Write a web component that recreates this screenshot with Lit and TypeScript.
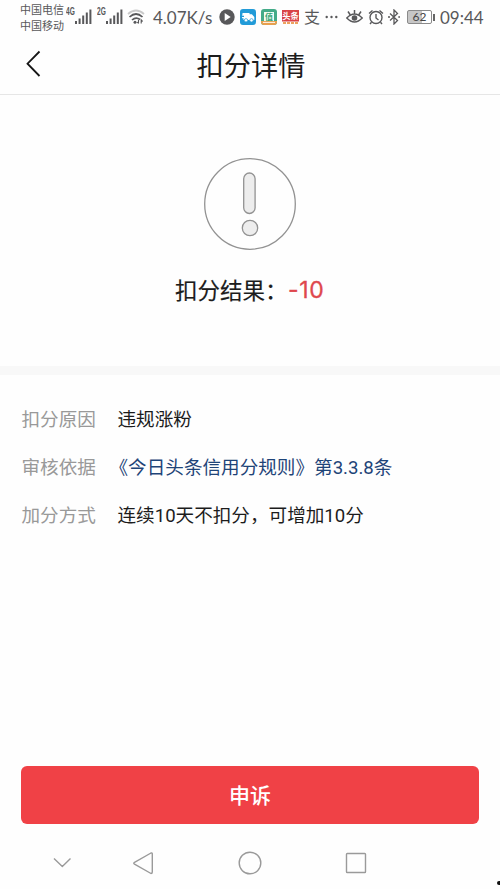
import { LitElement, html, css, svg } from "lit";
import { customElement } from "lit/decorators.js";

const signal = svg`
  <rect x="0" y="12" width="2" height="3"/><rect x="3.6" y="9.5" width="2" height="5.5"/>
  <rect x="7.2" y="6.5" width="2" height="8.5"/><rect x="10.8" y="3.5" width="2" height="11.5"/>
  <rect x="14.4" y="0.5" width="2" height="14.5"/>`;

@customElement("status-bar")
class StatusBar extends LitElement {
  static styles = css`
    :host { display: flex; align-items: center; height: 34px; padding-left: 20px; color: #58585a; }
    svg { display: block; flex: none; }
    .carriers { width: 46px; font-size: 11px; line-height: 16px; white-space: nowrap; margin-top: -1px; flex: none; }
    .net { width: 9px; font: 700 10px/10px "Liberation Sans", sans-serif; height: 22px; flex: none; }
    .net span { display: block; transform: scaleX(0.66); transform-origin: left; padding-top: 1px; }
    .net2 { margin-left: 5px; }
    .bars { fill: currentColor; }
    .wifi { margin-left: 4px; }
    .speed { width: 60px; margin-left: 8px; font: 17px/20px Lato, sans-serif; white-space: nowrap; flex: none; padding-top: 1px; }
    .app { margin-left: 5px; }
    .play { margin-left: 6px; }
    .pay { margin-left: 5px; font-size: 16px; width: 16px; line-height: 20px; margin-top: -2px; flex: none; }
    .dots { margin-left: 5px; }
    .eye { margin-left: 8px; }
    .alarm { margin-left: 5px; }
    .bt { margin-left: 4px; }
    .battery { margin-left: 7px; width: 23px; height: 12px; border: 1px solid #8a8a8a; border-radius: 2px; flex: none;
      font: 12px/12px Lato, sans-serif; color: #444; text-align: center; background: linear-gradient(90deg, #c6c6c6 62%, #fff 62%); }
    .cap { width: 2px; height: 7px; background: #666; margin-left: 1px; flex: none; }
    .time { margin-left: 5px; font: 17px/20px Lato, sans-serif; padding-top: 1px; }
  `;
  render() {
    return html`
      <div class="carriers"><div>中国电信</div><div>中国移动</div></div>
      <div class="net"><span>4G</span></div>
      <svg class="bars" width="17" height="16">${signal}</svg>
      <div class="net net2"><span>2G</span></div>
      <svg class="bars" width="17" height="16">${signal}</svg>
      <svg class="wifi" width="18" height="16" fill="none" stroke="#58585a" stroke-width="1.7">
        <path d="M1 5Q9-2 17 5" stroke="#c9c9c9"/><path d="M2.5 8Q9 2 15.5 8M5 11Q9 7.3 13 10.5"/>
        <circle cx="8" cy="13.3" r="1.5" fill="#58585a" stroke="none"/>
        <path d="M11.5 11v3.5M10.2 13l1.3 1.5M14.2 14.5V11l1.4 1.5" stroke-width="1.1"/>
      </svg>
      <div class="speed">4.07K/s</div>
      <svg class="play" width="16" height="16"><circle cx="8" cy="8" r="7.7" fill="#58585a"/><path d="M5.7 4v8l6-4z" fill="#fff"/></svg>
      <svg class="app" width="16" height="16"><rect width="16" height="16" rx="3" fill="#229bd8"/>
        <path d="M2.5 4h7v1.3h2.4L14.3 8v3H3.5V9.2H2V8h2V6.8H2.2V5.6H2.5z" fill="#fff"/>
        <circle cx="6" cy="11.3" r="1.7" fill="#fff" stroke="#229bd8" stroke-width=".7"/><circle cx="11.5" cy="11.3" r="1.7" fill="#fff" stroke="#229bd8" stroke-width=".7"/></svg>
      <svg class="app" width="16" height="16"><rect width="16" height="16" rx="3" fill="#43ab88"/><path d="M0 12h16v1a3 3 0 0 1-3 3H3a3 3 0 0 1-3-3z" fill="#e9a04e"/><path d="M3 3h10v9H3z" fill="#f2fbf5"/><path d="M2 13.4h12" stroke="#fff" stroke-width=".9"/>
        <text x="8" y="10.6" font-size="8" font-weight="700" text-anchor="middle" fill="#35a575">值</text></svg>
      <svg class="app" width="17" height="16"><rect y="1" width="17" height="11.5" fill="#d94247"/><text x="8.5" y="10" font-size="8.2" font-weight="700" text-anchor="middle" fill="#fff">头条</text><path d="M1 14h15" stroke="#eda25e" stroke-width="2" stroke-dasharray="3 1"/></svg>
      <div class="pay">支</div>
      <svg class="dots" width="13" height="4" fill="#58585a"><circle cx="1.7" cy="2" r="1.2"/><circle cx="6.5" cy="2" r="1.2"/><circle cx="11.3" cy="2" r="1.2"/></svg>
      <svg class="eye" width="17" height="16" fill="none" stroke="#58585a" stroke-width="1.5"><path d="M.8 9Q8.5 1 16.2 9Q8.5 17 .8 9zM8.5 4.5V1M4 5.5L2 2.5M13 5.5l2-3"/><circle cx="8.5" cy="9" r="2.8" fill="#58585a" stroke="none"/></svg>
      <svg class="alarm" width="16" height="16" fill="none" stroke="#58585a" stroke-width="1.4"><circle cx="8" cy="8.5" r="6"/><path d="M8 5v4l2.5 2M1 4.5L4.5 1.5M11.5 1.5L15 4.5M3.5 13.2L2 15M12.5 13.2L14 15"/></svg>
      <svg class="bt" width="12" height="16" fill="none" stroke="#58585a" stroke-width="1.3"><path d="M2 4.5l7.5 7L6 15V1l3.5 3.5L2 11.5M0 8h2M10.3 8h1.7"/></svg>
      <div class="battery">62</div><div class="cap"></div>
      <div class="time">09:44</div>
    `;
  }
}

@customElement("app-root")
class AppRoot extends LitElement {
  static styles = css`
    :host { display: flex; flex-direction: column; height: 889px; width: 500px; position: relative; overflow: hidden;
      background: #fefefe; color: #1c1c1c; font-family: "Noto Sans CJK SC", sans-serif; }
    svg { display: block; }
    .head { box-sizing: border-box; height: 61px; border-bottom: 1px solid #e6e6e6; display: grid;
      grid-template-columns: 60px 1fr 60px; align-items: center; }
    .back { margin-left: 26px; }
    h1 { margin: 0 0 1px 2px; font-size: 27.2px; font-weight: 400; text-align: center; line-height: 40px; }
    .result { height: 271px; display: flex; flex-direction: column; align-items: center; }
    .mark { margin-top: 62px; }
    .score { margin-top: 21px; display: flex; font-size: 22.5px; line-height: 34px; width: 150px; white-space: nowrap; -webkit-text-stroke: 0.15px; }
    .score b { font: 400 23px/36px Inter, sans-serif; letter-spacing: 0.7px; color: #df474d; -webkit-text-stroke: 0.3px; }
    .score span { width: 113px; flex: none; }
    .band { height: 9px; background: #f8f8f8; }
    .rows { padding: 18px 22px; flex: 1; margin: 0; }
    .row { display: grid; grid-template-columns: 95.5px 1fr; height: 48px; align-items: center; font-size: 18.6px; white-space: nowrap;
      font-family: Roboto, "Noto Sans CJK SC", sans-serif; }
    .row dt { color: #999; margin-left: -0.5px; }
    .row dd { margin: 0; }
    .row .link { color: #1e4478; margin-left: -8px; }
    button { height: 58px; margin: 0 21px; border: 0; border-radius: 6px; background: #f04146; color: #fff;
      font: 500 21px "Noto Sans CJK SC", sans-serif; padding: 0 0 2px; flex: none; }
    .nav { height: 65px; flex: none; }
    .dot { position: absolute; right: 0; bottom: 4px; width: 3px; height: 4px; background: #111; border-radius: 2px 0 0 2px; }
  `;
  render() {
    const rows = [
      ["扣分原因", "违规涨粉", ""],
      ["审核依据", "《今日头条信用分规则》第3.3.8条", "link"],
      ["加分方式", "连续10天不扣分，可增加10分", ""],
    ];
    return html`
      <status-bar></status-bar>
      <header class="head">
        <svg class="back" width="16" height="28" fill="none" stroke="#161616" stroke-width="1.8"><path d="M13.5 1.5L1.5 13.7L13.5 26"/></svg>
        <h1>扣分详情</h1>
      </header>
      <section class="result">
        <svg class="mark" width="94" height="94" fill="none" stroke="#929292" stroke-width="1.3">
          <circle cx="47" cy="47" r="45.3"/>
          <rect x="40.7" y="16" width="11.4" height="40.5" rx="5.7" fill="#ededed"/>
          <circle cx="47" cy="71" r="7.7" fill="#ededed"/>
        </svg>
        <div class="score"><span>扣分结果：</span><b>-10</b></div>
      </section>
      <div class="band"></div>
      <dl class="rows">${rows.map(([k, v, c]) => html`<div class="row"><dt>${k}</dt><dd class=${c}>${v}</dd></div>`)}</dl>
      <button>申诉</button>
      <svg class="nav" width="500" height="65" fill="none" stroke="#9a9a9a" stroke-width="1.4" stroke-linejoin="round">
        <path d="M54 34.5l8.3 8L70.5 34.5M134.5 38.3Q133 39.3 134.5 40.2L151 49.5Q152.3 49.5 152.3 48V30Q152.3 28.5 151 29z"/>
        <circle cx="250" cy="39" r="10.8"/><rect x="346.5" y="29.5" width="19" height="19" rx="0.8"/>
      </svg>
      <i class="dot"></i>
    `;
  }
}
